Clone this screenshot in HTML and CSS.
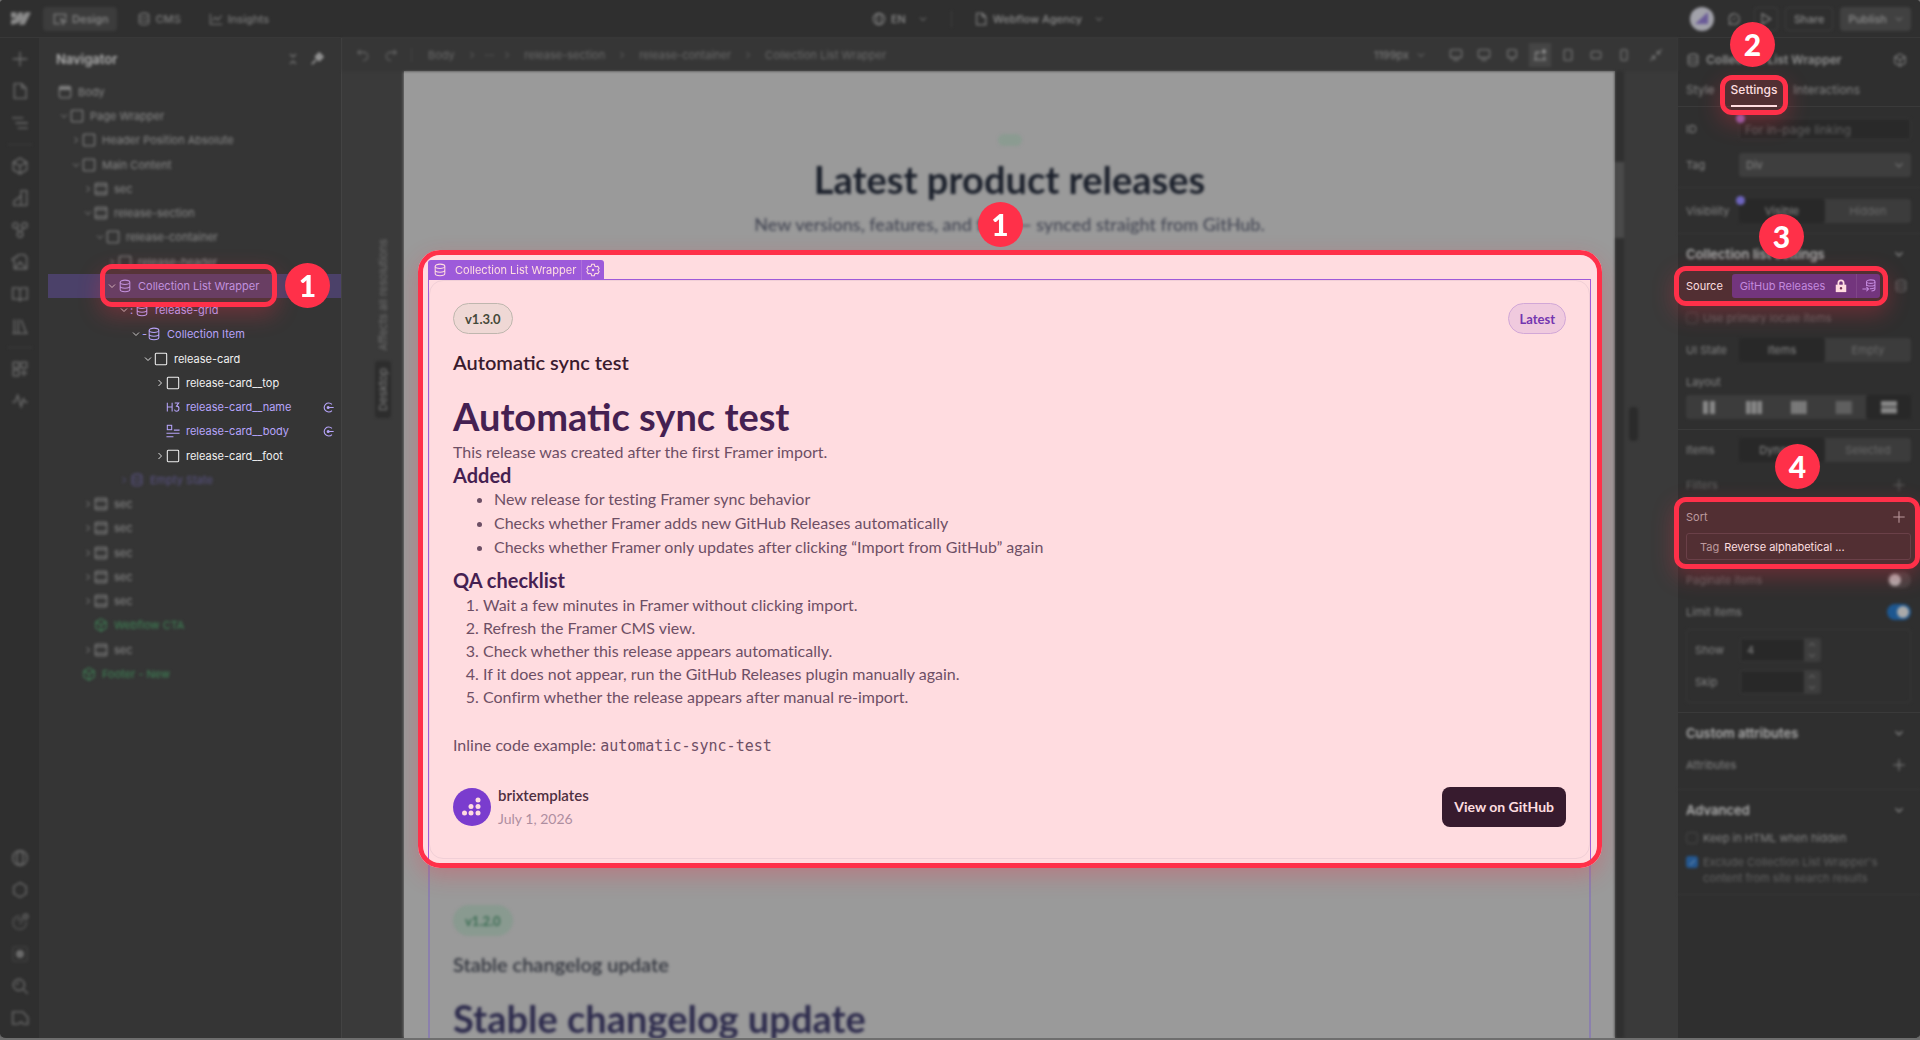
FILE: index.html
```html
<!DOCTYPE html>
<html lang="en">
<head>
<meta charset="utf-8">
<title>Webflow Agency – Designer</title>
<meta name="viewport" content="width=device-width, initial-scale=1">
<link rel="stylesheet" href="styles.css">
</head>
<body>
<svg class="sprite" aria-hidden="true">
  <symbol id="db" viewBox="0 0 16 16"><ellipse cx="8" cy="3.8" rx="5.5" ry="2.5"/><path d="M2.500 4v8c0 1.400 2.500 2.500 5.500 2.500s5.500-1.100 5.500-2.500V4M2.500 8c0 1.400 2.500 2.500 5.500 2.500s5.500-1.100 5.500-2.500"/></symbol>
  <symbol id="box" viewBox="0 0 16 16"><rect x="1.500" y="1.500" width="13" height="13" rx="1"/></symbol>
  <symbol id="section" viewBox="0 0 16 16"><rect x="1.500" y="1.500" width="13" height="13" rx="1"/><path d="M2 4.200h12M2 11.800h12" stroke-width="1.200"/></symbol>
  <symbol id="body" viewBox="0 0 16 16"><rect x="1.500" y="1.500" width="13" height="13" rx="2"/><path d="M2 4h12" stroke-width="3"/></symbol>
  <symbol id="down" viewBox="0 0 16 16"><path d="M4 6l4 4 4-4"/></symbol>
  <symbol id="right" viewBox="0 0 16 16"><path d="M6 4l4 4-4 4"/></symbol>
  <symbol id="plus" viewBox="0 0 16 16"><path d="M8 1.500v13M1.500 8h13"/></symbol>
  <symbol id="page" viewBox="0 0 16 16"><path d="M3 1.500h6.500L13.500 5.500v9H3zM9.500 1.500v4h4"/></symbol>
  <symbol id="lines" viewBox="0 0 16 16"><path d="M1 3.500h10M4 8h11M6 12.500h9"/></symbol>
  <symbol id="cube" viewBox="0 0 16 16"><path d="M8 1l6 3.500v7L8 15l-6-3.500v-7zM2 4.500L8 8l6-3.500M8 8v7"/></symbol>
  <symbol id="vars" viewBox="0 0 16 16"><path d="M9 14.500V1.500h5v13zM9 6L2.500 11v3.500H9"/></symbol>
  <symbol id="drops" viewBox="0 0 16 16"><circle cx="4" cy="4" r="2.500"/><circle cx="12" cy="4" r="2.500"/><circle cx="8" cy="12" r="2.500"/><path d="M5 6l2 3.500M11 6L9 9.500"/></symbol>
  <symbol id="image" viewBox="0 0 16 16"><path d="M5 4V3l2-1.500h5L14 4v10H3V7L1 6l2-2zM4 13l4-5 5 5"/></symbol>
  <symbol id="book" viewBox="0 0 16 16"><path d="M8 4v10M1.500 2.500h5L8 4l1.500-1.500h5v10h-5L8 14l-1.500-1.500h-5z"/></symbol>
  <symbol id="library" viewBox="0 0 16 16"><path d="M1 14.500h14M3 2v12M6.500 2v12M9 2.500l4.500 11.500"/></symbol>
  <symbol id="apps" viewBox="0 0 16 16"><rect x="2" y="2" width="5" height="5"/><rect x="9" y="2" width="5" height="5"/><rect x="2" y="9" width="5" height="5"/><path d="M11.500 8.500v6M8.500 11.500h6"/></symbol>
  <symbol id="pulse" viewBox="0 0 16 16"><path d="M1 9h2.500L6 3l3 10 2-7 1.500 3H15"/></symbol>
  <symbol id="globe" viewBox="0 0 16 16"><circle cx="8" cy="8" r="6.500"/><ellipse cx="8" cy="8" rx="2.800" ry="6.500"/></symbol>
  <symbol id="hex" viewBox="0 0 16 16"><path d="M8 1.500l5.500 3.200v6.600L8 14.500l-5.500-3.200V4.700z"/></symbol>
  <symbol id="help" viewBox="0 0 16 16"><path d="M13.500 7A6 6 0 1 1 8 2.500M6 7c0-3 4-2 4 0 0 1.500-2 1.500-2 3.500" opacity=".6"/><circle cx="13" cy="3" r="2"/></symbol>
  <symbol id="spark" viewBox="0 0 16 16"><rect x="1.500" y="1.500" width="13" height="13" rx="2" opacity=".3"/><circle cx="8" cy="8" r="2" stroke-width="3"/></symbol>
  <symbol id="search" viewBox="0 0 16 16"><circle cx="7" cy="7" r="5"/><path d="M11 11l4 4M5 7a2 2 0 0 1 2-2"/></symbol>
  <symbol id="video" viewBox="0 0 16 16"><path d="M1.500 13.500v-11h9l4.500 5v6h-4l-2-2-3 2z"/></symbol>
  <symbol id="undo" viewBox="0 0 16 16"><path d="M5 2L2 5l3 3M2 5h7a4.500 4.500 0 0 1 0 9H8"/></symbol>
  <symbol id="redo" viewBox="0 0 16 16"><path d="M11 2l3 3-3 3M14 5H7a4.500 4.500 0 0 0 0 9h1"/></symbol>
  <symbol id="desktop" viewBox="0 0 16 16"><rect x="1.500" y="2" width="13" height="9" rx="1.500"/><path d="M5 14h6"/></symbol>
  <symbol id="desktop-s" viewBox="0 0 16 16"><rect x="3" y="2" width="10" height="9" rx="1.500"/><path d="M6 14h4"/></symbol>
  <symbol id="base" viewBox="0 0 16 16"><path d="M3 13V5h5M13 9v4M1 13.500h14"/><path d="M12.500 1.500v5M10 4h5" stroke-width="2"/></symbol>
  <symbol id="tablet" viewBox="0 0 16 16"><rect x="3.500" y="2" width="9" height="12" rx="1.500"/></symbol>
  <symbol id="phone-l" viewBox="0 0 16 16"><rect x="2.500" y="4" width="11" height="8" rx="1.500"/></symbol>
  <symbol id="phone" viewBox="0 0 16 16"><rect x="4.500" y="2" width="7" height="12" rx="1.500"/></symbol>
  <symbol id="shrink" viewBox="0 0 16 16"><path d="M14.500 1.500L9.500 6.500V3M9.500 6.500H13M1.500 14.500l5-5V13M6.500 9.500H3"/></symbol>
  <symbol id="collapse" viewBox="0 0 16 16"><path d="M4.500 2.500L8 5.500l3.500-3M4.500 13.500l3.500-3 3.500 3"/></symbol>
  <symbol id="pin" viewBox="0 0 16 16"><path d="M2 14l5-5M8 4l4 4" stroke-width="2"/><path d="M7 5.500l3.500-3.500L14 5.500 10.500 9z" stroke-width="3"/></symbol>
  <symbol id="bind" viewBox="0 0 16 16"><path d="M13 3.600A6.500 6.500 0 1 0 13 12.400M7 8h8.500"/><circle cx="7.500" cy="8" r="1.200" stroke-width="2"/></symbol>
  <symbol id="h3" viewBox="0 0 16 16"><path d="M1.500 3v10M7 3v10M1.500 8H7M10 3.500h4.500L12 7c4 .2 3.500 5.800 0 5.800-1.200 0-2-.7-2.300-1.800"/></symbol>
  <symbol id="rich" viewBox="0 0 16 16"><rect x="1.500" y="1.500" width="5" height="5"/><path d="M9 7h6.500M.500 10.500h15M.500 14.500h8"/></symbol>
  <symbol id="gear" viewBox="0 0 16 16"><path d="M6.500 1.500h3l.500 2 1.500.800 2-.600 1.500 2.600L13.500 8l1.500 1.700-1.500 2.600-2-.600-1.500.800-.500 2h-3l-.500-2-1.500-.800-2 .600L1 9.700 2.500 8 1 6.300l1.500-2.600 2 .600L6 3.500z"/><circle cx="8" cy="8" r=".8"/></symbol>
  <symbol id="lock" viewBox="0 0 16 16"><path d="M5 7V4.500a3 3 0 0 1 6 0V7" stroke-width="2"/><path d="M2 6.500h12V15H2z" fill="currentColor" stroke="none"/><circle cx="8" cy="10.500" r=".7" stroke="#5a3458" stroke-width="1.500"/></symbol>
  <symbol id="db-in" viewBox="0 0 16 16"><ellipse cx="10" cy="3" rx="4.800" ry="2"/><path d="M5.200 3v5M14.800 3v8.500c0 1.200-1.500 2-4 2.200M5.200 6c0 1.200 2 2 4.800 2s4.800-.8 4.800-2M9 11c3.500.2 5.800-.6 5.800-2M.500 11.500h7M5 9l2.500 2.500L5 14"/></symbol>
  <symbol id="chat" viewBox="0 0 16 16"><path d="M2.500 14l.5-3a6 6 0 1 1 2.500 2.400zM6 9l4-2"/></symbol>
  <symbol id="play" viewBox="0 0 16 16"><path d="M3.500 2l10 6-10 6z"/></symbol>
  <symbol id="chart" viewBox="0 0 16 16"><path d="M1.500 2v12H15M4 10l3-4 3 3 4.500-5"/></symbol>
  <symbol id="design" viewBox="0 0 16 16"><path d="M8 13.500H1.500v-11h13V8M9 8l6 2.500-2.500 1-1 2.500z"/></symbol>
</svg>

<div class="app">
<header class="topbar">
  <nav class="group dim" aria-label="Modes">
    <svg class="logo" viewBox="0 0 22 14" aria-hidden="true"><path d="M22 0l-7 14H8.500l3-5.700C9 11.500 5.300 13.500 0 14V8.500s3.400-.2 5.400-2.300H0V0h6v5l2.500-5H13v4.900L15.500 0z"/></svg>
    <a class="mode active" href="#"><svg><use href="#design"/></svg>Design</a>
    <a class="mode" href="#"><svg><use href="#db"/></svg>CMS</a>
    <a class="mode" href="#"><svg><use href="#chart"/></svg>Insights</a>
  </nav>
  <div class="group dim site">
    <button><svg><use href="#globe"/></svg>EN<svg class="chev"><use href="#down"/></svg></button>
    <span class="bar"></span>
    <button><svg><use href="#page"/></svg>Webflow Agency<svg class="chev"><use href="#down"/></svg></button>
  </div>
  <div class="group dim tools">
    <svg class="avatar" viewBox="0 0 24 24" role="img" aria-label="Account"><circle cx="12" cy="12" r="12" fill="#a2a2aa"/><path d="M5 17L18 5v12z" fill="#6a5b98"/></svg>
    <button class="icon" aria-label="Comments"><svg><use href="#chat"/></svg></button>
    <button class="outlined" aria-label="Preview"><svg><use href="#play"/></svg></button>
    <button class="outlined">Share</button>
    <button class="publish">Publish<svg class="chev"><use href="#down"/></svg></button>
  </div>
</header>

<div class="workspace">
<nav class="rail dim" aria-label="Panels">
  <button aria-label="Add"><svg><use href="#plus"/></svg></button>
  <button aria-label="Pages"><svg><use href="#page"/></svg></button>
  <button aria-label="Navigator"><svg><use href="#lines"/></svg></button>
  <hr>
  <button aria-label="Components"><svg><use href="#cube"/></svg></button>
  <button aria-label="Variables"><svg><use href="#vars"/></svg></button>
  <button aria-label="Style selectors"><svg><use href="#drops"/></svg></button>
  <button aria-label="Assets"><svg><use href="#image"/></svg></button>
  <button aria-label="Guide"><svg><use href="#book"/></svg></button>
  <button aria-label="Libraries"><svg><use href="#library"/></svg></button>
  <hr>
  <button aria-label="Apps"><svg><use href="#apps"/></svg></button>
  <button aria-label="Audit"><svg><use href="#pulse"/></svg></button>
  <span class="spacer"></span>
  <button aria-label="Language"><svg><use href="#globe"/></svg></button>
  <button aria-label="Settings"><svg><use href="#hex"/></svg></button>
  <button aria-label="Help"><svg><use href="#help"/></svg></button>
  <button aria-label="Assistant"><svg><use href="#spark"/></svg></button>
  <button aria-label="Search"><svg><use href="#search"/></svg></button>
  <button aria-label="Tutorials"><svg><use href="#video"/></svg></button>
</nav>

<aside class="navigator">
  <header class="nav-head dim"><h2>Navigator</h2><svg><use href="#collapse"/></svg><svg class="pin"><use href="#pin"/></svg></header>
  <ul class="tree">
    <li class="d0 dim"><svg><use href="#body"/></svg>Body</li>
    <li class="d1 dim"><svg class="chev"><use href="#down"/></svg><svg><use href="#box"/></svg>Page Wrapper</li>
    <li class="d2 dim"><svg class="chev"><use href="#right"/></svg><svg><use href="#box"/></svg>Header Position Absolute</li>
    <li class="d2 dim"><svg class="chev"><use href="#down"/></svg><svg><use href="#box"/></svg>Main Content</li>
    <li class="d3 dim"><svg class="chev"><use href="#right"/></svg><svg><use href="#section"/></svg>sec</li>
    <li class="d3 dim"><svg class="chev"><use href="#down"/></svg><svg><use href="#section"/></svg>release-section</li>
    <li class="d4 dim"><svg class="chev"><use href="#down"/></svg><svg><use href="#box"/></svg>release-container</li>
    <li class="d5 dim"><svg class="chev"><use href="#right"/></svg><svg><use href="#box"/></svg>release-header</li>
    <li class="d5 selected cms"><svg class="chev"><use href="#down"/></svg><svg><use href="#db"/></svg>Collection List Wrapper
      <span class="ring ring-node"></span><b class="badge badge-node">1</b></li>
    <li class="d6 cms"><svg class="chev"><use href="#down"/></svg><i class="lead">:</i><svg><use href="#db"/></svg>release-grid</li>
    <li class="d7 cms"><svg class="chev"><use href="#down"/></svg><i class="lead">-</i><svg><use href="#db"/></svg>Collection Item</li>
    <li class="d8"><svg class="chev"><use href="#down"/></svg><svg><use href="#box"/></svg>release-card</li>
    <li class="d9"><svg class="chev"><use href="#right"/></svg><svg><use href="#box"/></svg>release-card__top</li>
    <li class="d9 cms"><span class="chev"></span><svg><use href="#h3"/></svg>release-card__name<svg class="bound"><use href="#bind"/></svg></li>
    <li class="d9 cms"><span class="chev"></span><svg><use href="#rich"/></svg>release-card__body<svg class="bound"><use href="#bind"/></svg></li>
    <li class="d9"><svg class="chev"><use href="#right"/></svg><svg><use href="#box"/></svg>release-card__foot</li>
    <li class="d6 dim empty"><svg class="chev"><use href="#right"/></svg><svg><use href="#db"/></svg>Empty State</li>
    <li class="d3 dim"><svg class="chev"><use href="#right"/></svg><svg><use href="#section"/></svg>sec</li>
    <li class="d3 dim"><svg class="chev"><use href="#right"/></svg><svg><use href="#section"/></svg>sec</li>
    <li class="d3 dim"><svg class="chev"><use href="#right"/></svg><svg><use href="#section"/></svg>sec</li>
    <li class="d3 dim"><svg class="chev"><use href="#right"/></svg><svg><use href="#section"/></svg>sec</li>
    <li class="d3 dim"><svg class="chev"><use href="#right"/></svg><svg><use href="#section"/></svg>sec</li>
    <li class="d3 dim component"><span class="chev"></span><svg><use href="#cube"/></svg>Webflow CTA</li>
    <li class="d3 dim"><svg class="chev"><use href="#right"/></svg><svg><use href="#section"/></svg>sec</li>
    <li class="d2 dim component"><span class="chev"></span><svg><use href="#cube"/></svg>Footer - New</li>
  </ul>
</aside>

<main class="stage">
  <div class="toolbar dim">
    <div class="history"><button aria-label="Undo"><svg><use href="#undo"/></svg></button><button aria-label="Redo"><svg><use href="#redo"/></svg></button></div>
    <nav class="crumbs" aria-label="Breadcrumb">
      <a href="#">Body</a><svg><use href="#right"/></svg><a class="more" href="#">···</a><svg><use href="#right"/></svg><a href="#">release-section</a><svg><use href="#right"/></svg><a href="#">release-container</a><svg><use href="#right"/></svg><a href="#">Collection List Wrapper</a>
    </nav>
    <div class="breakpoints">
      <button class="width">1199px<svg class="chev"><use href="#down"/></svg></button>
      <button aria-label="1920"><svg><use href="#desktop"/></svg></button>
      <button aria-label="1440"><svg><use href="#desktop"/></svg></button>
      <button aria-label="1280"><svg><use href="#desktop-s"/></svg></button>
      <button class="on" aria-label="Desktop"><svg><use href="#base"/></svg></button>
      <button aria-label="Tablet"><svg><use href="#tablet"/></svg></button>
      <button aria-label="Mobile landscape"><svg><use href="#phone-l"/></svg></button>
      <button aria-label="Mobile portrait"><svg><use href="#phone"/></svg></button>
      <button aria-label="Shrink"><svg><use href="#shrink"/></svg></button>
    </div>
  </div>
  <div class="canvas">
    <div class="gutter-left dim"><span>Affects all resolutions</span><span class="current">Desktop</span></div>
    <div class="site-page">
      <section class="intro">
        <span class="eyebrow dim"></span>
        <h1 class="dim">Latest product releases</h1>
        <p class="dim">New versions, features, and fixes — synced straight from GitHub.</p>
        <b class="badge badge-list">1</b>
      </section>
      <div class="collection">
        <article class="release focus">
          <span class="frame"></span>
          <div class="tag"><svg><use href="#db"/></svg>Collection List Wrapper<button aria-label="Element settings"><svg><use href="#gear"/></svg></button></div>
          <div class="release-top"><span class="pill">v1.3.0</span><span class="pill latest">Latest</span></div>
          <h3>Automatic sync test</h3>
          <div class="rich">
            <h1>Automatic sync test</h1>
            <p>This release was created after the first Framer import.</p>
            <h2>Added</h2>
            <ul>
              <li>New release for testing Framer sync behavior</li>
              <li>Checks whether Framer adds new GitHub Releases automatically</li>
              <li>Checks whether Framer only updates after clicking “Import from GitHub” again</li>
            </ul>
            <h2 class="spaced">QA checklist</h2>
            <ol>
              <li>Wait a few minutes in Framer without clicking import.</li>
              <li>Refresh the Framer CMS view.</li>
              <li>Check whether this release appears automatically.</li>
              <li>If it does not appear, run the GitHub Releases plugin manually again.</li>
              <li>Confirm whether the release appears after manual re-import.</li>
            </ol>
            <p class="last">Inline code example: <code>automatic-sync-test</code></p>
          </div>
          <footer class="release-foot">
            <svg class="author" viewBox="0 0 38 38" aria-hidden="true"><circle cx="19" cy="19" r="19" fill="#5f3fea"/><g fill="#fff"><circle cx="25" cy="12" r="2.500"/><circle cx="18" cy="18.500" r="2.500"/><circle cx="25" cy="18.500" r="2.500"/><circle cx="11.500" cy="25" r="2.500"/><circle cx="18" cy="25" r="2.500"/><circle cx="25" cy="25" r="2.500"/></g></svg>
            <div class="byline"><strong>brixtemplates</strong><time datetime="2026-07-01">July 1, 2026</time></div>
            <a class="cta" href="#">View on GitHub</a>
          </footer>
          <span class="ring ring-list"></span>
        </article>
        <article class="release next">
          <div class="release-top dim"><span class="pill">v1.2.0</span></div>
          <h3 class="dim">Stable changelog update</h3>
          <div class="rich"><h1 class="dim">Stable changelog update</h1></div>
        </article>
      </div>
    </div>
    <div class="gutter-right dim"><span class="track"></span><span class="handle"></span></div>
  </div>
</main>

<aside class="settings">
  <header class="element dim"><svg><use href="#db"/></svg><h2>Collection List Wrapper</h2><svg><use href="#cube"/></svg></header>
  <nav class="tabs" aria-label="Panel tabs">
    <a class="dim" href="#">Style</a>
    <a class="current" href="#">Settings<span class="ring ring-tab"></span></a>
    <a class="dim" href="#">Interactions</a>
    <b class="badge badge-tab">2</b>
  </nav>
  <section class="basics dim">
    <div class="row"><label for="el-id">ID</label><input id="el-id" type="text" placeholder="For in-page linking"><i class="dot violet"></i></div>
    <div class="row"><label for="el-tag">Tag</label><span class="select"><select id="el-tag"><option>Div</option></select><svg><use href="#down"/></svg></span></div>
  </section>
  <section class="visibility dim">
    <div class="row"><span class="label">Visibility</span><span class="segments"><button class="on">Visible</button><button>Hidden</button></span><i class="dot"></i></div>
  </section>
  <section class="list">
    <h3 class="dim">Collection list settings<svg><use href="#down"/></svg></h3>
    <div class="row source"><span class="label">Source</span>
      <span class="source-box"><button class="source-name">GitHub Releases<svg class="lock"><use href="#lock"/></svg></button><button class="source-open" aria-label="Open collection"><svg><use href="#db-in"/></svg></button><span class="ring ring-source"></span></span>
      <svg class="cog dim"><use href="#db"/></svg>
      <b class="badge badge-source">3</b></div>
    <label class="row check faint dim"><input type="checkbox">Use primary locale items</label>
    <div class="row dim"><span class="label">UI State</span><span class="segments"><button class="on">Items</button><button>Empty</button></span></div>
    <div class="field dim"><span class="row">Layout</span>
      <span class="segments layouts"><button aria-label="2 columns"><i class="c2"></i></button><button aria-label="3 columns"><i class="c3"></i></button><button aria-label="4 columns"><i class="c4"></i></button><button aria-label="6 columns"><i class="c6"></i></button><button class="on" aria-label="Rows"><i class="c1"></i></button></span></div>
  </section>
  <section class="items">
    <div class="row dim"><span class="label">Items</span><span class="segments"><button class="on">Dynamic</button><button>Selected</button></span></div>
    <div class="row filters dim">Filters<button class="add" aria-label="Add filter"><svg><use href="#plus"/></svg></button></div>
    <div class="sort"><div class="row">Sort<button class="add" aria-label="Add sort"><svg><use href="#plus"/></svg></button></div>
      <button class="sort-rule">Tag <span>Reverse alphabetical ...</span></button>
      <span class="ring ring-sort"></span><b class="badge badge-sort">4</b></div>
    <label class="row faint dim">Paginate items<input class="switch" type="checkbox"></label>
    <label class="row dim">Limit items<input class="switch" type="checkbox" checked></label>
    <div class="limits dim">
      <div class="row"><label for="show">Show</label><span class="stepper"><input id="show" type="text" value="4"><i><svg class="up"><use href="#down"/></svg><svg><use href="#down"/></svg></i></span></div>
      <div class="row"><label for="skip">Skip</label><span class="stepper"><input id="skip" type="text"><i><svg class="up"><use href="#down"/></svg><svg><use href="#down"/></svg></i></span></div>
    </div>
  </section>
  <section class="attributes dim">
    <h3>Custom attributes<svg><use href="#down"/></svg></h3>
    <div class="row">Attributes<button class="add" aria-label="Add attribute"><svg><use href="#plus"/></svg></button></div>
  </section>
  <section class="advanced dim">
    <h3>Advanced<svg><use href="#down"/></svg></h3>
    <label class="check"><input type="checkbox">Keep in HTML when hidden</label>
    <label class="check faint"><input type="checkbox" checked>Exclude Collection List Wrapper's content from site search results</label>
  </section>
</aside>
</div>
</div>
</body>
</html>
```
FILE: styles.css
```css
:root {
  --red: #ff3049;
  --ui: Inter, "Liberation Sans", sans-serif;
  --site: Lato, "Open Sans", sans-serif;
}
* { box-sizing: border-box; }
body { margin: 0; background: #6e6e6e; color: #868686; font: 400 11px/16px var(--ui); font-variant-ligatures: none; }
h1, h2, h3, p, ul, ol { margin: 0; padding: 0; }
button, input, select { font: inherit; color: inherit; border: 0; padding: 0; background: none; }
button { display: flex; align-items: center; justify-content: center; }
a { color: inherit; text-decoration: none; }
svg { width: 14px; height: 14px; flex: none; fill: none; stroke: currentColor; stroke-width: 1.2; }
.sprite { position: absolute; width: 0; height: 0; }
.dim { filter: blur(1.4px); }
.app { display: flex; flex-direction: column; height: 100vh; overflow: hidden; border-bottom: 2px solid #6e6e6e; border-radius: 4px 4px 6px 6px; background: #2f2f2f; }

/* Top bar */
.topbar { display: flex; justify-content: space-between; height: 38px; flex: none; padding: 0 9px 0 11px; background: #2f2f2f; border-bottom: 1px solid #383838; font-weight: 500; }
.group, .group button, .mode { display: flex; align-items: center; }
.logo { width: 20px; height: 13px; margin-right: 12px; fill: #8a8a8a; stroke: none; }
.mode { gap: 5px; height: 24px; padding: 0 8px 0 10px; margin-right: 10px; border-radius: 4px; color: #7c7c7c; }
.mode.active { background: #3c3c3c; color: #8c8c8c; }
.group .chev { width: 12px; height: 12px; margin-left: 6px; }
.site { color: #8c8c8c; }
.site button { gap: 5px; }
.bar { width: 1px; height: 16px; margin: 0 22px; background: #404040; }
.tools { gap: 7px; color: #8c8c8c; }
.avatar { width: 24px; height: 24px; stroke: none; }
.icon { width: 26px; }
.outlined { height: 24px; min-width: 24px; padding: 0 8px; border: 1px solid #3e3e3e; border-radius: 4px; }
.outlined svg { margin: 0 -4px; }
.publish { height: 24px; padding: 0 6px 0 8px; border-radius: 4px; background: #414141; }

.workspace { display: flex; flex: 1; min-height: 0; }

/* Icon rail */
.rail { display: flex; flex-direction: column; width: 39px; flex: none; padding: 5px 0 4px; color: #6e6e6e; }
.rail button { height: 32px; }
.rail svg { width: 18px; height: 18px; }
.rail hr { width: 24px; margin: 5px auto; border: 0; border-top: 1px solid #3e3e3e; }
.spacer { flex: 1; }

/* Navigator */
.navigator { width: 303px; flex: none; background: #353535; border-right: 1px solid #434343; }
.nav-head { display: flex; align-items: center; height: 42px; padding: 0 17px; color: #8a8a8a; }
.nav-head h2 { flex: 1; font: 600 13px/16px var(--ui); color: #b0b0b0; }
.pin { margin-left: 10px; color: #9a9a9a; }
.tree { list-style: none; }
.tree li { position: relative; display: flex; align-items: center; height: 24px; margin-left: 9px; white-space: nowrap; color: #f0f0f0; }
.tree li:nth-child(4n) { height: 25px; }
.tree svg { margin-right: 6px; }
.tree .chev { width: 12px; height: 12px; margin: 0; flex: none; }
.tree .dim { color: #8a8a8a; }
.tree .cms { color: #b6a4fa; }
.tree .cms > .chev { color: #d8d8d8; }
.tree .empty { color: #5a5385; }
.tree .component { color: #3f8557; }
.tree .selected { background: #4b4169; z-index: 2; }
.lead { width: 5px; font-style: normal; }
.tree .bound { width: 11px; height: 11px; margin: 0 7px 0 auto; stroke-width: 1.6; }
.d0 { padding-left: 10px; }
.d1 { padding-left: 10px; }
.d2 { padding-left: 22px; }
.d3 { padding-left: 34px; }
.d4 { padding-left: 46px; }
.d5 { padding-left: 58px; }
.d6 { padding-left: 70px; }
.d7 { padding-left: 82px; }
.d8 { padding-left: 94px; }
.d9 { padding-left: 106px; }

/* Stage */
.stage { display: flex; flex-direction: column; flex: 1; min-width: 0; background: #3a3a3a; }
.toolbar { display: flex; align-items: center; height: 33px; flex: none; background: #363636; color: #6a6a6a; }
.history { display: flex; gap: 14px; padding: 0 13px 0 14px; border-right: 1px solid #424242; }
.crumbs { display: flex; align-items: center; gap: 11px; flex: 1; padding-left: 16px; white-space: nowrap; }
.crumbs svg { width: 12px; height: 12px; }
.crumbs .more { margin: 0 -4px; }
.breakpoints { display: flex; align-items: center; gap: 6px; padding-right: 11px; color: #808080; }
.breakpoints button { width: 22px; height: 24px; }
.breakpoints .width { width: auto; gap: 6px; margin-right: 12px; }
.breakpoints .width svg { width: 12px; }
.breakpoints .on { background: #454545; color: #9c9c9c; }
.breakpoints button:last-child { margin-left: 4px; }
.canvas { display: flex; flex: 1; min-height: 0; }
.gutter-left { display: flex; flex-direction: column; align-items: flex-end; gap: 10px; width: 62px; padding: 168px 13px 0 0; color: #707070; }
.gutter-left span { writing-mode: vertical-rl; transform: rotate(180deg); }
.gutter-left .current { padding: 7px 0; border-radius: 3px; background: #2d2d2d; color: #808080; }
.gutter-right { display: flex; width: 63px; align-items: flex-start; gap: 5px; }
.track { align-self: stretch; width: 9px; border-block: solid #303030; border-width: 91px 0 800px; background: #4a4a4a; }
.handle { width: 9px; height: 34px; margin-top: 336px; border-radius: 4px; background: #2b2b2b; }

/* Published page inside the canvas */
.site-page { flex: 1; min-width: 0; overflow: hidden; padding: 0 24px; background: #9a9a9a; box-shadow: 0 0 3px #9a9a9a; font-family: var(--site); }
.intro { position: relative; z-index: 3; display: flex; flex-direction: column; align-items: center; height: 208px; padding-top: 63px; }
.eyebrow { width: 24px; height: 12px; border-radius: 6px; background: #8b9b91; }
.intro h1 { margin-top: 11px; font: 700 38px/44px var(--site); color: #1b202b; }
.intro p { margin-top: 11px; font: 500 18px/24px var(--site); color: #444754; }
.collection { border: 1px solid #8b80ad; border-width: 1px 2px 0; }
.release { position: relative; padding: 23px 23px 28px; }
.focus { isolation: isolate; z-index: 2; }
.focus::before { content: ""; position: absolute; z-index: -1; inset: -30px -13px -10px -12px; border-radius: 22px; background: #fff; }
.frame { position: absolute; z-index: -1; inset: -1px -2px -6px; border: 1px solid #8c63f7; border-bottom: 0; }
.frame::before { content: ""; position: absolute; inset: 0 0 5px; border: 1px solid #eef0f4; border-radius: 14px; }
.tag { position: absolute; left: -2px; top: -20px; display: flex; align-items: center; gap: 8px; height: 20px; padding-left: 5px; border-radius: 3px 3px 0 0; background: #8a63f8; color: #fff; font: 400 11px/16px var(--ui); overflow: hidden; }
.tag button { width: 23px; height: 20px; margin-left: -3px; border-left: 1px solid #9f7df9; }
.release-top { display: flex; justify-content: space-between; height: 31px; }
.pill { display: flex; align-items: center; padding: 0 11px; border: 1px solid #b2d2c3; border-radius: 16px; background: #ecfaf2; color: #1c5038; font: 700 13px/18px var(--site); }
.latest { padding: 0 10px; border-color: #c9c0f5; background: #edeafd; color: #5738c6; }
.release h3 { margin-top: 14px; font: 600 20px/28px var(--site); color: #0f172a; }
.rich { font-size: 16px; line-height: 24px; color: #50566c; }
.rich h1 { margin-top: 18px; font: 700 38px/44px var(--site); color: #1f1d55; }
.rich p { margin-top: 2px; }
.rich h2 { font: 700 20px/23px var(--site); color: #1f1d55; }
.rich .spaced { margin-top: 9px; line-height: 24px; }
.rich ul { padding-left: 41px; }
.rich ol { padding: 1px 0 0 30px; line-height: 23px; }
.rich .last { margin-top: 25px; }
code { font: 15px/16px "DejaVu Sans Mono", monospace; }
.release-foot { display: flex; align-items: center; gap: 7px; margin-top: 27px; }
.author { width: 38px; height: 38px; stroke: none; }
.byline { display: flex; flex-direction: column; flex: 1; font: 14px/23px var(--site); color: #9ea2b3; }
.byline strong { font-size: 15px; font-weight: 600; color: #2a2f40; }
.cta { display: flex; align-items: center; justify-content: center; height: 40px; padding: 0 12px; border-radius: 8px; background: #0f172a; color: #fff; font: 700 14px/18px var(--site); }
.next { padding-top: 47px; }
.next .pill { border-color: #88998f; background: #899a90; color: #3c6d54; }
.next h3 { color: #33363f; }
.next h1 { color: #2d2b4c; }

/* Settings panel */
.settings { display: flex; flex-direction: column; width: 242px; flex: none; background: #2f2f2f; color: #858585; }
.element { display: flex; align-items: center; gap: 6px; height: 44px; padding: 0 13px 0 8px; }
.element h2 { flex: 1; font: 600 12px/16px var(--ui); color: #909090; }
.tabs { position: relative; display: flex; gap: 16px; height: 25px; padding-left: 8px; border-bottom: 1px solid #3a3a3a; font-size: 12px; }
.tabs .current { position: relative; z-index: 2; color: #fff; border-bottom: 2px solid #fff; height: 25px; font-weight: 500; }
.settings section { display: flex; flex-direction: column; gap: 8px; padding: 0 9px 0 8px; border-bottom: 1px solid #3a3a3a; }
.settings h3 { display: flex; align-items: center; justify-content: space-between; height: 40px; margin-bottom: -8px; padding-right: 5px; font: 600 13px/16px var(--ui); color: #b0b0b0; }
.row { position: relative; display: flex; align-items: center; height: 24px; flex: none; }
.row > label, .label { width: 53px; flex: none; }
.faint { color: #626262; }
.settings .basics { gap: 12px; padding-top: 10px; padding-bottom: 10px; }
.settings .visibility { padding-top: 11px; padding-bottom: 10px; }
#el-id { flex: 1; min-width: 0; height: 22px; padding: 0 5px; border: 1px solid #393939; border-radius: 3px; background: #292929; font-size: 12px; }
#el-id::placeholder { color: #606060; }
.dot { position: absolute; left: 50px; top: -3px; width: 9px; height: 9px; border-radius: 5px; background: #6e65c0; }
.violet { background: #8d60ae; }
.select { display: flex; align-items: center; flex: 1; height: 24px; padding: 0 5px 0 7px; border-radius: 3px; background: #3e3e3e; }
select { flex: 1; appearance: none; }
.segments { display: flex; flex: 1; height: 24px; border-radius: 3px; background: #3c3c3c; color: #6a6a6a; }
.segments button { flex: 1; border-radius: 3px; }
.segments .on { background: #282828; color: #888; }
.settings .list { padding-bottom: 10px; }
.source { z-index: 2; }
.source .label { width: 46px; color: #fff; }
.source-box { position: relative; display: flex; height: 24px; width: 148px; border-radius: 3px; background: #573788; color: #b79bfb; }
.source-name { flex: 1; gap: 9px; }
.source-open { width: 24px; border-left: 1px solid #674a96; }
.lock { color: #fff; }
.cog { margin-left: 14px; color: #666; }
.check { display: flex; align-items: flex-start; gap: 5px; }
.row.check { align-items: center; }
.check input { appearance: none; width: 12px; height: 12px; flex: none; margin: 2px 0 0; border: 1px solid #4a4a4a; border-radius: 3px; }
.row.check input { margin-top: 0; }
.check input:checked { border: 0; background: #24578f linear-gradient(135deg, transparent 42%, #8ba2bb 42% 58%, transparent 58%) center / 7px 5px no-repeat; }
.field { display: flex; flex-direction: column; }
.segments.layouts { flex: none; margin-top: 1px; }
.layouts i { height: 13px; width: 16px; }
.layouts .c2 { width: 12px; background: repeating-linear-gradient(90deg, #888 0 5px, transparent 5px 7px); }
.layouts .c3 { background: repeating-linear-gradient(90deg, #888 0 4px, #606060 4px 6px); }
.layouts .c4 { background: repeating-linear-gradient(90deg, #808080 0 3px, #606060 3px 4px); }
.layouts .c6 { background: repeating-linear-gradient(90deg, #6a6a6a 0 2px, #484848 2px 3px); }
.layouts .c1 { background: repeating-linear-gradient(180deg, #888 0 5px, #505050 5px 7px); }
.settings .items { padding-top: 8px; padding-bottom: 9px; }
.filters { margin-top: 3px; color: #626262; }
.add { margin: 0 6px 0 auto; width: 12px; }
.sort { position: relative; display: flex; flex-direction: column; gap: 4px; z-index: 2; color: #b0b0b0; }
.sort-rule { justify-content: flex-start; gap: 5px; height: 27px; padding-left: 13px; border: 1px solid #4c4449; border-radius: 3px; }
.sort-rule span { color: #fff; }
.switch { appearance: none; width: 24px; height: 16px; margin: 0 0 0 auto; padding: 2px; border-radius: 8px; background: #424242; }
.switch::before { content: ""; display: block; width: 12px; height: 12px; border-radius: 6px; background: #aaa; }
.switch:checked { background: #1d5790; padding-left: 10px; }
.limits { display: flex; flex-direction: column; gap: 8px; margin-top: -3px; padding: 8px; border: 1px solid #393939; border-radius: 3px; }
.limits .row > label { width: 45px; }
.stepper { display: flex; height: 24px; width: 81px; border: 1px solid #3c3c3c; border-radius: 3px; }
.stepper input { width: 63px; padding-left: 6px; background: #282828; }
.stepper i { flex: 1; display: flex; flex-direction: column; background: #3e3e3e; }
.stepper svg { width: 12px; height: 11px; margin: 0 auto; }
.stepper .up { transform: rotate(180deg); }
.settings .attributes { padding-bottom: 12px; }
.settings .advanced { padding-bottom: 8px; }

/* Callouts */
.ring { position: absolute; z-index: 3; pointer-events: none; border: 5px solid var(--red); border-radius: 12px; background: rgb(255 48 73 / 17%); background-clip: padding-box; box-shadow: 0 8px 22px rgb(255 48 73 / 28%); }
.badge { position: absolute; z-index: 4; display: flex; align-items: center; justify-content: center; width: 45px; height: 45px; border-radius: 50%; background: var(--red); color: #fff; font: 900 30px/45px var(--site); }
.ring-node { inset: -10px 64px -9px 52px; }
.badge-node { right: 11px; top: -11px; }
.ring-list { inset: -30px -13px -10px -12px; border-radius: 22px; }
.badge-list { left: 50%; bottom: 32px; margin-left: -32px; }
.ring-tab { inset: -7px -11px -10px; }
.badge-tab { left: 52px; top: -60px; z-index: 5; }
.ring-source { inset: -8px; left: -58px; }
.badge-source { left: 80px; top: -60px; }
.source .badge-source { left: 73px; }
.ring-sort { inset: -8px -9px -9px -12px; }
.badge-sort { left: 89px; top: -61px; }
```
